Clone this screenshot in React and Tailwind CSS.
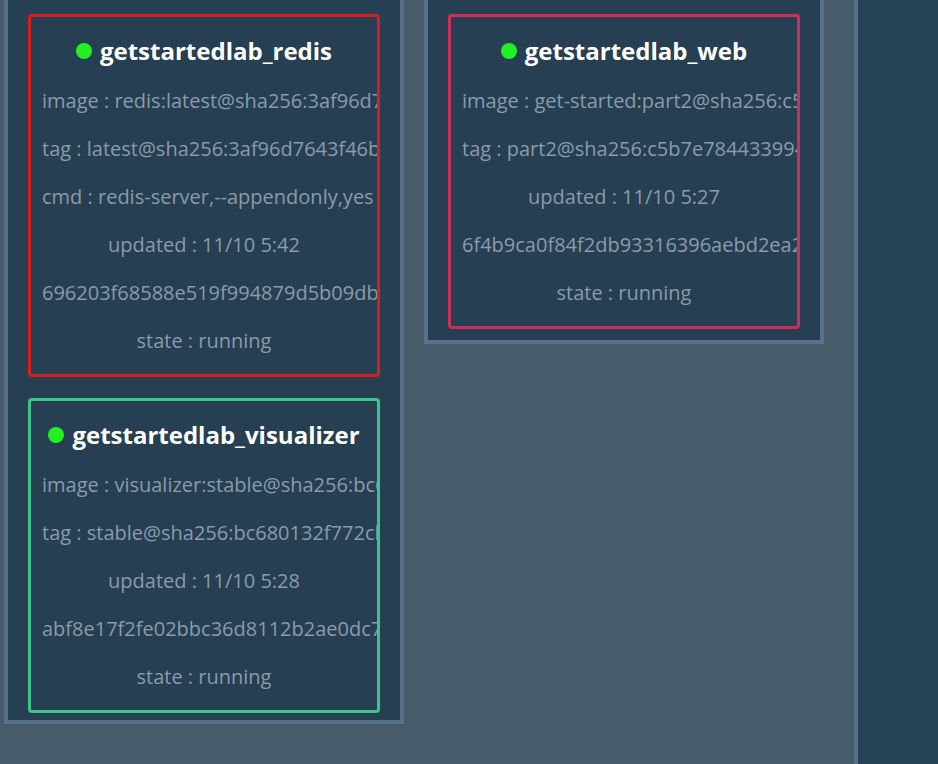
import React from 'react';

const services = [
  {
    column: 0,
    name: 'getstartedlab_redis',
    border: 'border-[#d3201f]',
    lines: [
      'image : redis:latest@sha256:3af96d7643f46b2d9a8a5ee1b1d1b2a1c6a3f1a0e5b9f0c1',
      'tag : latest@sha256:3af96d7643f46b2d9a8a5ee1b1d1b2a1c6a3f1a0e5b9f0c1',
      'cmd : redis-server,--appendonly,yes',
      'updated : 11/10 5:42',
      '696203f68588e519f994879d5b09db7d2c1a6f3e',
      'state : running',
    ],
  },
  {
    column: 0,
    name: 'getstartedlab_visualizer',
    border: 'border-[#3cc58b]',
    lines: [
      'image : visualizer:stable@sha256:bc680132f772cb44062795c514570db2f0b6f91063bc3afa2386edaaa0ef0b20',
      'tag : stable@sha256:bc680132f772cb44062795c514570db2f0b6f91063bc3afa2386edaaa0ef0b20',
      'updated : 11/10 5:28',
      'abf8e17f2fe02bbc36d8112b2ae0dc7a1b6e9f0c',
      'state : running',
    ],
  },
  {
    column: 1,
    name: 'getstartedlab_web',
    border: 'border-[#d02e5a]',
    lines: [
      'image : get-started:part2@sha256:c5b7e784433994e8d2e1c7a5f0b9c3e2a1d0f6b4',
      'tag : part2@sha256:c5b7e784433994e8d2e1c7a5f0b9c3e2a1d0f6b4',
      'updated : 11/10 5:27',
      '6f4b9ca0f84f2db93316396aebd2ea2c1f0e8d7b',
      'state : running',
    ],
  },
];

function ServiceCard({ service }) {
  return (
    <div
      className={`w-[352px] overflow-hidden rounded-[4px] border-[3px] ${service.border} bg-[#263f52] px-[11px] pb-[9px] text-center`}
    >
      <div className="flex items-center justify-center gap-[8px] pt-[14px] leading-[40px]">
        <span className="inline-block h-[16px] w-[16px] shrink-0 rounded-full bg-[#22f022]" />
        <span className="whitespace-nowrap text-[24px] font-bold text-white">{service.name}</span>
      </div>
      <div className="mt-[6px]">
        {service.lines.map((line, i) => (
          <div key={i} className="whitespace-nowrap text-[20px] leading-[48px] text-[#8a9bab]">
            {line}
          </div>
        ))}
      </div>
    </div>
  );
}

export default function App() {
  const columns = [0, 1];

  return (
    <div
      className="flex h-[764px] w-full overflow-hidden bg-[#475b6b]"
      style={{ fontFamily: '"Open Sans", "Noto Sans", sans-serif' }}
    >
      <div className="flex items-start gap-[20px] pl-[4px]">
        {columns.map((col) => (
          <div
            key={col}
            className={`flex w-[400px] flex-col items-center gap-[21px] border-x-4 border-b-4 border-[#587089] bg-[#263f52] pt-[14px] ${
              col === 0 ? 'pb-[7px]' : 'pb-[11px]'
            }`}
          >
            {services
              .filter((s) => s.column === col)
              .map((s) => (
                <ServiceCard key={s.name} service={s} />
              ))}
          </div>
        ))}
      </div>

      {/* right hand side pane */}
      <div className="ml-auto h-full w-[84px] border-l-4 border-[#587089] bg-[#264257]" />
    </div>
  );
}
